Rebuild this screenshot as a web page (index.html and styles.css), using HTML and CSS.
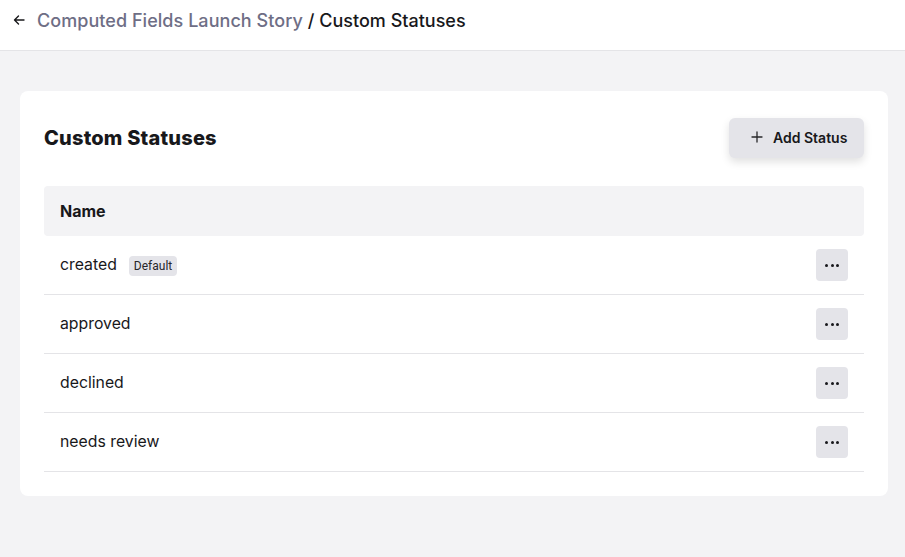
FILE: index.html
```html
<!DOCTYPE html>
<html>
<head>
<meta charset="utf-8">
<link rel="stylesheet" href="styles.css">
</head>
<body>
<header class="topbar">
  <svg class="back" width="12" height="12" viewBox="0 0 12 12"><path d="M11 6H1.5M5.5 2L1.5 6l4 4" fill="none" stroke="#18181b" stroke-width="1.4" stroke-linecap="round" stroke-linejoin="round"/></svg>
  <span class="crumb-parent">Computed Fields Launch Story</span>
  <span class="crumb-current">/ Custom Statuses</span>
</header>
<main class="main">
  <section class="card">
    <div class="card-head">
      <h1 class="title">Custom Statuses</h1>
      <button class="add-btn">
        <svg width="12" height="12" viewBox="0 0 12 12"><path d="M6 1v10M1 6h10" stroke="#27272a" stroke-width="1.3" stroke-linecap="round"/></svg>
        <span>Add Status</span>
      </button>
    </div>
    <div class="table">
      <div class="thead">Name</div>
      <div class="row">
        <div class="cell"><span>created</span><span class="badge">Default</span></div>
        <button class="more"><span></span><span></span><span></span></button>
      </div>
      <div class="row">
        <div class="cell"><span>approved</span></div>
        <button class="more"><span></span><span></span><span></span></button>
      </div>
      <div class="row">
        <div class="cell"><span>declined</span></div>
        <button class="more"><span></span><span></span><span></span></button>
      </div>
      <div class="row">
        <div class="cell"><span>needs review</span></div>
        <button class="more"><span></span><span></span><span></span></button>
      </div>
    </div>
  </section>
</main>
</body>
</html>
```
FILE: styles.css
```css
* { box-sizing: border-box; }
html, body { margin: 0; height: 100%; }
body {
  font-family: Inter, "Noto Sans", sans-serif;
  color: #18181b;
  background: #f3f3f5;
}
.topbar {
  height: 51px;
  background: #fff;
  border-bottom: 1px solid #e4e4e7;
  display: flex;
  align-items: center;
  padding: 0 0 10px 13px;
  font-size: 18px;
  font-weight: 500;
}
.back { margin-right: 12px; }
.crumb-parent { color: #6e6e85; margin-right: 5px; letter-spacing: 0.05px; }
.crumb-current { color: #18181b; }
.main { padding: 40px 17px 20px 20px; }
.card {
  background: #fff;
  border-radius: 8px;
  padding: 27px 24px 24px 24px;
}
.card-head {
  display: flex;
  justify-content: space-between;
  align-items: center;
  margin-bottom: 28px;
}
.title {
  margin: 0;
  font-size: 20px;
  font-weight: 800;
  letter-spacing: 0.2px;
}
.add-btn {
  display: flex;
  align-items: center;
  gap: 10px;
  height: 40px;
  width: 135px;
  padding: 0 0 2px 22px;
  border: none;
  border-radius: 6px;
  background: #e4e4e9;
  box-shadow: 0 4px 8px rgba(0,0,0,0.12);
  font-family: inherit;
  font-size: 14px;
  font-weight: 600;
  color: #18181b;
}
.thead {
  height: 50px;
  background: #f3f3f5;
  border-radius: 4px;
  display: flex;
  align-items: center;
  padding-left: 16px;
  font-size: 16px;
  font-weight: 700;
}
.row {
  height: 59px;
  display: flex;
  align-items: center;
  justify-content: space-between;
  padding: 0 16px;
  border-bottom: 1px solid #e4e4e7;
  font-size: 15.8px;
}
.cell { display: flex; align-items: center; gap: 12px; padding-bottom: 1px; }
.badge {
  font-size: 12px;
  background: #e4e4e9;
  border-radius: 4px;
  padding: 3px 5px 3px;
  margin-top: 2px;
  font-family: Roboto, sans-serif;
  color: #27272a;
}
.more {
  width: 32px;
  height: 32px;
  border: none;
  border-radius: 4px;
  background: #e4e4e9;
  display: flex;
  align-items: center;
  justify-content: center;
  gap: 2.5px;
  padding: 0;
}
.more span {
  width: 3px;
  height: 3px;
  border-radius: 50%;
  background: #18181b;
}
```
